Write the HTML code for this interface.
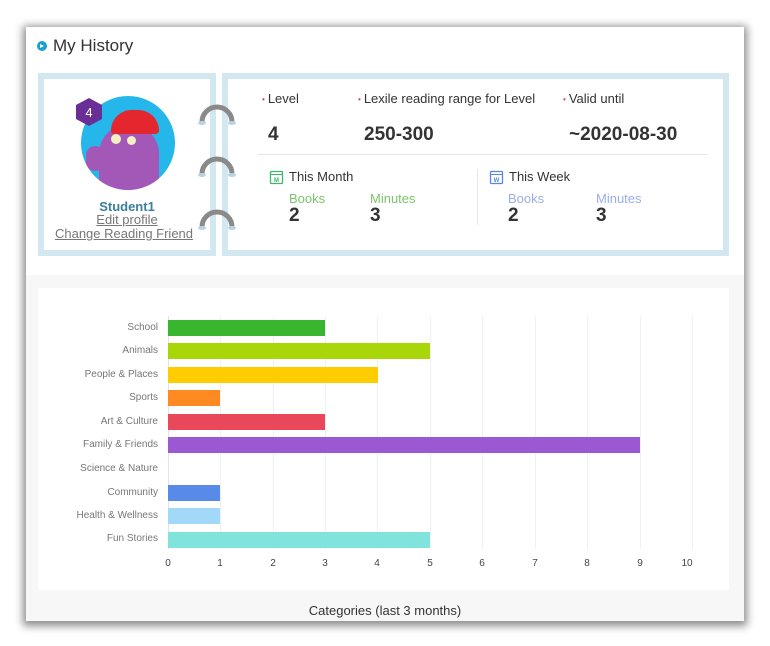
<!DOCTYPE html>
<html><head><style>
body{margin:0;width:770px;height:646px;background:#fff;font-family:"Liberation Sans",sans-serif;position:relative;overflow:hidden}
.card{position:absolute;left:26px;top:27px;width:718px;height:594px;background:#fff;box-shadow:0 2px 8px 3px rgba(0,0,0,.45)}
.abs{position:absolute}
.gray{position:absolute;left:0;top:248px;width:718px;height:346px;background:#f7f7f7}
.panel{position:absolute;border:6px solid #d3e7f1;background:#fff;box-sizing:border-box}
.lbl{font-size:13px;color:#333}
.lbl b{color:#e0475a;font-size:8px;vertical-align:middle;margin-right:3px}
.big{font-size:19px;font-weight:bold;color:#333}
.cat{position:absolute;right:612px;font-size:10px;color:#777;text-align:right;white-space:nowrap}
.bar{position:absolute;left:168px;height:16px}
.grid{position:absolute;top:316px;width:1px;height:233px;background:#eef0f3}
.tick{position:absolute;top:558px;font-size:10px;color:#444;width:20px;text-align:center}
</style></head><body>
<div class="card">
<div class="gray"></div>
</div>
<div class="abs" style="left:37px;top:41px;width:10px;height:10px;border-radius:50%;background:#1aa0cf"></div>
<div class="abs" style="left:40px;top:43.5px;width:0;height:0;border-left:4px solid #fff;border-top:2.5px solid transparent;border-bottom:2.5px solid transparent"></div>
<div class="abs" style="left:53px;top:36px;font-size:17px;color:#333">My History</div>
<div class="panel" style="left:38px;top:73px;width:178px;height:183px"></div>
<div class="abs" style="left:81px;top:96px;width:94px;height:94px;border-radius:50%;background:#25b6ea;overflow:hidden">
<div class="abs" style="left:18px;top:28px;width:60px;height:80px;border-radius:30px 30px 10px 10px;background:#a358b8"></div>
<div class="abs" style="left:5px;top:50px;width:18px;height:25px;border-radius:9px;background:#a358b8"></div>
<div class="abs" style="left:30px;top:14px;width:48px;height:24px;border-radius:24px 24px 4px 4px;background:#e4262f"></div>
<div class="abs" style="left:30px;top:38px;width:10px;height:10px;border-radius:50%;background:#f3efc0"></div>
<div class="abs" style="left:46px;top:40px;width:9px;height:9px;border-radius:50%;background:#f3efc0"></div>
</div>
<svg class="abs" style="left:74px;top:97px" width="30" height="30"><polygon points="15,1 28,8 28,22 15,29 2,22 2,8" fill="#6a2f96"/><text x="15" y="20" text-anchor="middle" font-size="13" fill="#fff" font-family="Liberation Sans">4</text></svg>
<div class="abs" style="left:38px;width:178px;top:199px;text-align:center;font-size:13px;font-weight:bold;color:#3a7fa0">Student1</div>
<div class="abs" style="left:38px;width:178px;top:212px;text-align:center;font-size:13px;color:#777;text-decoration:underline">Edit profile</div>
<div class="abs" style="left:38px;width:172px;top:226px;text-align:center;font-size:13px;color:#777;text-decoration:underline">Change Reading Friend</div>
<div class="panel" style="left:222px;top:73px;width:507px;height:183px"></div>
<svg class="abs" style="left:194px;top:100px" width="50" height="150">
<g fill="none" stroke="#8a8a8a" stroke-width="5">
<path d="M8 22 A15 15 0 0 1 38 22"/><path d="M8 74 A15 15 0 0 1 38 74"/><path d="M8 127 A15 15 0 0 1 38 127"/></g>
<g fill="#b9d3e2"><ellipse cx="8" cy="23" rx="4" ry="2"/><ellipse cx="38" cy="23" rx="4" ry="2"/><ellipse cx="8" cy="75" rx="4" ry="2"/><ellipse cx="38" cy="75" rx="4" ry="2"/><ellipse cx="8" cy="128" rx="4" ry="2"/><ellipse cx="38" cy="128" rx="4" ry="2"/></g>
</svg>
<div class="abs lbl" style="left:262px;top:91px"><b>•</b>Level</div>
<div class="abs lbl" style="left:358px;top:91px"><b>•</b>Lexile reading range for Level</div>
<div class="abs lbl" style="left:563px;top:91px"><b>•</b>Valid until</div>
<div class="abs big" style="left:268px;top:124px">4</div>
<div class="abs big" style="left:364px;top:124px">250-300</div>
<div class="abs big" style="left:569px;top:124px">~2020-08-30</div>
<div class="abs" style="left:258px;top:154px;width:450px;height:1px;background:#e6e6e6"></div>
<div class="abs" style="left:477px;top:169px;width:1px;height:56px;background:#e6e6e6"></div>
<svg class="abs" style="left:269px;top:169px" width="16" height="16"><rect x="1.5" y="2.5" width="12" height="12" rx="1" fill="none" stroke="#3bb86a" stroke-width="1.3"/><line x1="1.5" y1="5.5" x2="13.5" y2="5.5" stroke="#3bb86a"/><text x="7.5" y="13" text-anchor="middle" font-size="6" font-weight="bold" fill="#3bb86a" font-family="Liberation Sans">M</text></svg>
<div class="abs lbl" style="left:289px;top:169px">This Month</div>
<svg class="abs" style="left:489px;top:169px" width="16" height="16"><rect x="1.5" y="2.5" width="12" height="12" rx="1" fill="none" stroke="#5b87e0" stroke-width="1.3"/><line x1="1.5" y1="5.5" x2="13.5" y2="5.5" stroke="#5b87e0"/><text x="7.5" y="13" text-anchor="middle" font-size="6" font-weight="bold" fill="#5b87e0" font-family="Liberation Sans">W</text></svg>
<div class="abs lbl" style="left:509px;top:169px">This Week</div>
<div class="abs" style="left:289px;top:191px;font-size:13px;color:#7cc46a">Books</div>
<div class="abs" style="left:370px;top:191px;font-size:13px;color:#7cc46a">Minutes</div>
<div class="abs" style="left:508px;top:191px;font-size:13px;color:#9aaee6">Books</div>
<div class="abs" style="left:596px;top:191px;font-size:13px;color:#9aaee6">Minutes</div>
<div class="abs big" style="left:289px;top:205px">2</div>
<div class="abs big" style="left:370px;top:205px">3</div>
<div class="abs big" style="left:508px;top:205px">2</div>
<div class="abs big" style="left:596px;top:205px">3</div>
<div class="abs" style="left:38px;top:288px;width:691px;height:302px;background:#fff"></div>
<div class="grid" style="left:168px;background:#dfe3ea"></div>
<div class="grid" style="left:220px"></div><div class="grid" style="left:273px"></div><div class="grid" style="left:325px"></div><div class="grid" style="left:377px"></div><div class="grid" style="left:430px"></div><div class="grid" style="left:482px"></div><div class="grid" style="left:535px"></div><div class="grid" style="left:587px"></div><div class="grid" style="left:640px"></div><div class="grid" style="left:692px"></div>
<div class="cat" style="top:322px">School</div>
<div class="cat" style="top:345px">Animals</div>
<div class="cat" style="top:369px">People &amp; Places</div>
<div class="cat" style="top:392px">Sports</div>
<div class="cat" style="top:416px">Art &amp; Culture</div>
<div class="cat" style="top:439px">Family &amp; Friends</div>
<div class="cat" style="top:463px">Science &amp; Nature</div>
<div class="cat" style="top:487px">Community</div>
<div class="cat" style="top:510px">Health &amp; Wellness</div>
<div class="cat" style="top:533px">Fun Stories</div>
<div class="bar" style="top:320px;width:157px;background:#3ab52f"></div>
<div class="bar" style="top:343px;width:262px;background:#a9d608"></div>
<div class="bar" style="top:367px;width:210px;background:#ffcc00"></div>
<div class="bar" style="top:390px;width:52px;background:#ff8a22"></div>
<div class="bar" style="top:414px;width:157px;background:#e9485b"></div>
<div class="bar" style="top:437px;width:472px;background:#9a59d3"></div>
<div class="bar" style="top:485px;width:52px;background:#588be9"></div>
<div class="bar" style="top:508px;width:52px;background:#a2d9f8"></div>
<div class="bar" style="top:532px;width:262px;background:#80e4dc"></div>
<div class="tick" style="left:158px">0</div><div class="tick" style="left:210px">1</div><div class="tick" style="left:263px">2</div><div class="tick" style="left:315px">3</div><div class="tick" style="left:367px">4</div><div class="tick" style="left:420px">5</div><div class="tick" style="left:472px">6</div><div class="tick" style="left:525px">7</div><div class="tick" style="left:577px">8</div><div class="tick" style="left:630px">9</div><div class="tick" style="left:677px">10</div>
<div class="abs" style="left:26px;width:718px;top:603px;text-align:center;font-size:13px;color:#333">Categories (last 3 months)</div>
</body></html>
